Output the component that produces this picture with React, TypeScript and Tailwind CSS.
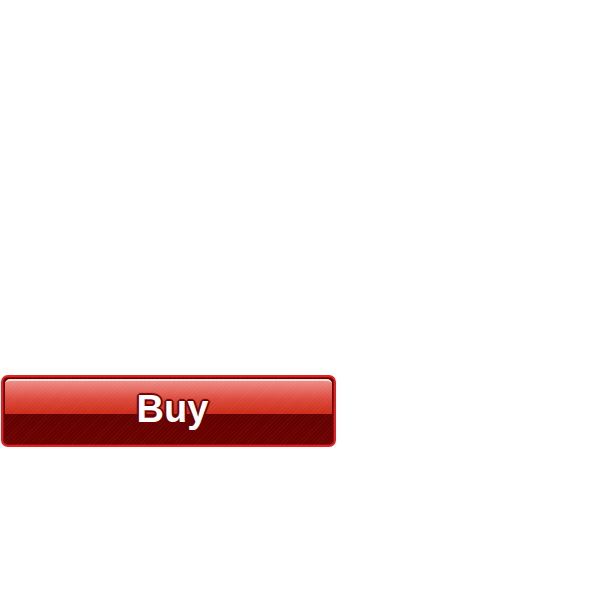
import React from 'react';

export default function App() {
  return (
    <div className="min-h-[600px] w-[600px] bg-white pt-[375px] pl-[1px]">
      <button
        type="button"
        className="relative block h-[72px] w-[335px] overflow-hidden rounded-[7px] border-2 border-[#e22222] bg-[linear-gradient(to_bottom,#5a0000,#6c0000)] shadow-[inset_0_0_0_1px_#900a0a]"
      >
        <div className="absolute inset-x-[2px] top-[2px] h-[35px] rounded-t-[5px] border-t-2 border-[#f8e0d4] bg-[linear-gradient(to_bottom,#ee8c86,#dc4a3c_55%,#cc2c18)]" />
        <div className="absolute inset-0 bg-[repeating-linear-gradient(135deg,rgba(255,255,255,0.035)_0px,rgba(255,255,255,0.035)_1px,transparent_1px,transparent_3px)]" />
        <span className="relative flex h-full items-center justify-center pb-[4px] pl-[8px] font-['Liberation_Sans',Arial,sans-serif] text-[38px] font-bold leading-none text-white [text-shadow:0_0_1px_#700000,1px_1px_0_#700000,-1px_-1px_0_#700000,1px_-1px_0_#700000,-1px_1px_0_#700000,0_2px_1px_#700000,2px_0_1px_#700000,-2px_0_1px_#700000,0_-2px_1px_#700000]">
          Buy
        </span>
      </button>
    </div>
  );
}
